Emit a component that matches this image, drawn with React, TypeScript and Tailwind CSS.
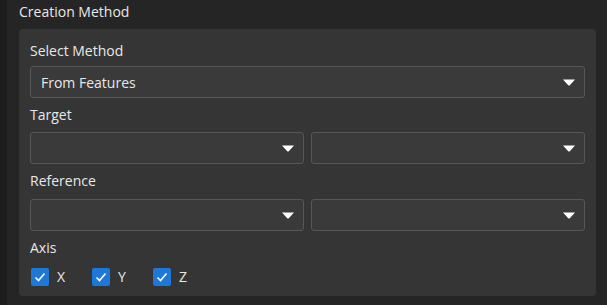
import React from "react";

function Caret() {
  return (
    <svg width="12" height="7" viewBox="0 0 12 7" className="shrink-0">
      <path d="M0 0.5 H12 L7 6 Q6 7 5 6 Z" fill="#ffffff" />
    </svg>
  );
}

function Select({ value, grow }: { value?: string; grow?: boolean }) {
  return (
    <div
      className={
        grow
          ? "flex h-[32px] flex-1 items-center justify-between rounded-[3px] border border-[#575757] bg-[#3a3a3a] pl-[10px] pr-[9px] text-[14px] text-[#e8e8e8]"
          : "flex h-[32px] items-center justify-between rounded-[3px] border border-[#575757] bg-[#3a3a3a] pl-[10px] pr-[9px] text-[14px] text-[#e8e8e8]"
      }
    >
      <span>{value}</span>
      <Caret />
    </div>
  );
}

function Check({ label }: { label: string }) {
  return (
    <label className="flex w-[61px] items-center gap-[8px] text-[14px] text-[#e8e8e8]">
      <span className="flex h-[18px] w-[18px] items-center justify-center rounded-[2px] bg-[#1d78d8]">
        <svg width="14" height="14" viewBox="0 0 14 14">
          <path d="M2.5 7.5 L5.5 10.5 L11.5 3.5" fill="none" stroke="#ffffff" strokeWidth="1.6" />
        </svg>
      </span>
      <span>{label}</span>
    </label>
  );
}

export default function App() {
  return (
    <div
      className="flex h-[305px] w-[607px] bg-[#252525]"
      style={{ fontFamily: '"Open Sans", "Noto Sans", sans-serif' }}
    >
      <div className="w-[7px] bg-[#1d1d1d]" />
      <div className="flex flex-1 flex-col pl-[12px] pr-[11px]">
        <div className="flex h-[29px] items-start pt-[1px] text-[14px] text-[#e8e8e8]">Creation Method</div>
        <div className="flex h-[267px] flex-col rounded-[4px] bg-[#353535] px-[11px] pt-[9px]">
          <div className="h-[28px] text-[14px] leading-[26px] text-[#e8e8e8]">Select Method</div>
          <Select value="From Features" />
          <div className="h-[34px] pt-[7px] text-[14px] leading-[20px] text-[#e8e8e8]">Target</div>
          <div className="flex gap-[7px]">
            <Select grow />
            <Select grow />
          </div>
          <div className="h-[35px] pt-[7px] text-[14px] leading-[20px] text-[#e8e8e8]">Reference</div>
          <div className="flex gap-[7px]">
            <Select grow />
            <Select grow />
          </div>
          <div className="h-[35px] pt-[7px] text-[14px] leading-[20px] text-[#e8e8e8]">Axis</div>
          <div className="flex pl-[1px]">
            <Check label="X" />
            <Check label="Y" />
            <Check label="Z" />
          </div>
        </div>
      </div>
    </div>
  );
}
